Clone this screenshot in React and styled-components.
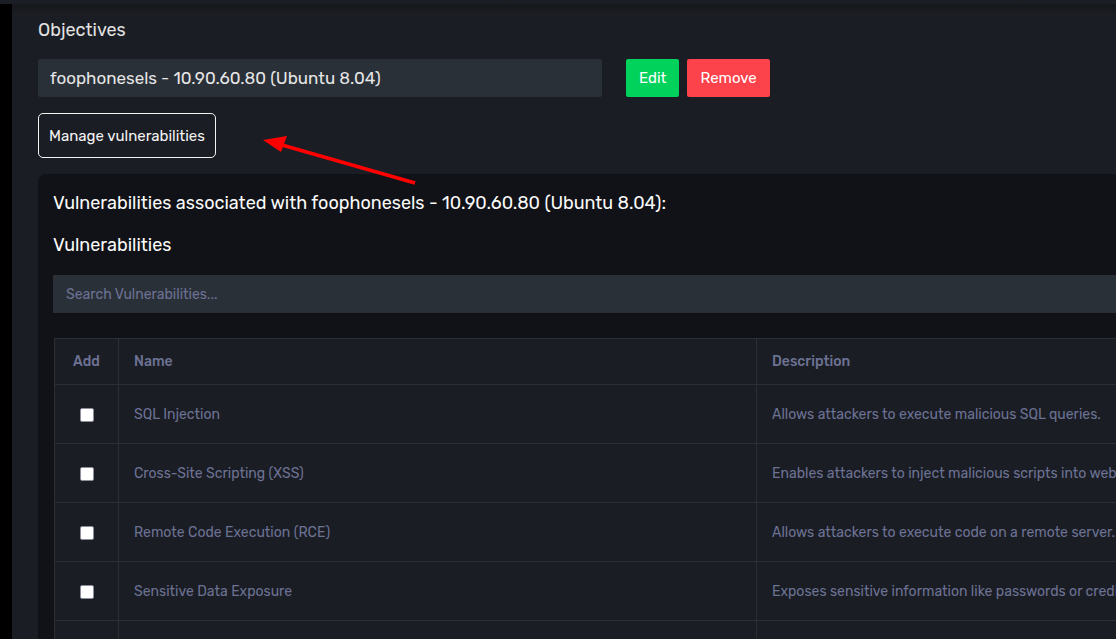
import React from "react";
import styled, { createGlobalStyle } from "styled-components";

const GlobalStyle = createGlobalStyle`
  html, body {
    margin: 0;
    padding: 0;
    background: #000;
    overflow: hidden;
    font-family: Rubik, Roboto, "Liberation Sans", sans-serif;
  }
`;

const Page = styled.div`
  position: relative;
  width: 1116px;
  height: 639px;
  overflow: hidden;
  display: flex;
  flex-direction: column;
`;

const TopStrip = styled.div`
  height: 4px;
  flex: none;
  background: #1c1e26;
`;

const Body = styled.div`
  flex: 1;
  display: flex;
`;

const SideStrip = styled.div`
  width: 12px;
  flex: none;
  background: #000;
`;

const Panel = styled.div`
  flex: none;
  width: 1400px;
  background: linear-gradient(#15171b 0, #1b1d24 10px);
  padding: 14px 26px 0;
  box-sizing: border-box;
`;

const Heading = styled.h4`
  margin: 0 0 17px;
  font-size: 18px;
  font-weight: 400;
  line-height: 24px;
  color: #e2e2e2;
`;

const ObjectiveRow = styled.div`
  display: flex;
  align-items: center;
  gap: 8px;
`;

const ObjectiveField = styled.div`
  width: 564px;
  height: 38px;
  box-sizing: border-box;
  padding: 0 12px;
  display: flex;
  align-items: center;
  background: #2a3038;
  border-radius: 2px;
  color: #e6e6e6;
  font-size: 17px;
  margin-right: 16px;
`;

const Button = styled.button`
  height: 38px;
  padding: 0 13px;
  border: none;
  border-radius: 2px;
  font-family: inherit;
  font-size: 15px;
  color: #fff;
  background: ${(p) => (p.$variant === "danger" ? "#fc424a" : "#00d25b")};
`;

const OutlineButton = styled.button`
  display: block;
  margin-top: 16px;
  height: 45px;
  padding: 0 10px;
  background: transparent;
  border: 1px solid #f2f2f2;
  border-radius: 5px;
  color: #f2f2f2;
  font-family: inherit;
  font-size: 15px;
`;

const Card = styled.div`
  margin-top: 16px;
  background: #111217;
  border-radius: 8px 0 0 0;
  padding: 18px 15px 0;
`;

const CardTitle = styled.h4`
  margin: 0;
  font-size: 18px;
  font-weight: 400;
  line-height: 22px;
  color: #fafafa;
`;

const SubTitle = styled.h4`
  margin: 20px 0 0;
  font-size: 18px;
  font-weight: 400;
  line-height: 22px;
  color: #fafafa;
`;

const Search = styled.input`
  display: block;
  margin-top: 19px;
  width: 100%;
  height: 38px;
  box-sizing: border-box;
  padding: 0 12px;
  border: 1px solid #2c2e33;
  background: #2a3038;
  color: #fff;
  font-family: inherit;
  font-size: 14px;
  outline: none;
  &::placeholder {
    color: #6c7293;
  }
`;

const Table = styled.table`
  margin-top: 25px;
  margin-left: 1px;
  width: 100%;
  border-collapse: collapse;
  background: #1b1d25;
  font-size: 14px;
  color: #6c7293;
`;

const Th = styled.th`
  height: 46px;
  box-sizing: border-box;
  padding: 0 15px;
  border: 1px solid #2c2e33;
  text-align: ${(p) => (p.$center ? "center" : "left")};
  font-weight: 500;
  width: ${(p) => p.$w || "auto"};
`;

const Td = styled.td`
  height: 59px;
  box-sizing: border-box;
  padding: 0 15px;
  border: 1px solid #2c2e33;
  text-align: ${(p) => (p.$center ? "center" : "left")};
  white-space: nowrap;
`;

const Check = styled.input`
  appearance: none;
  width: 14px;
  height: 14px;
  margin: 0;
  box-sizing: border-box;
  border: 1.5px solid #8d909c;
  border-radius: 2px;
  background: #fff;
  vertical-align: middle;
`;

const Arrow = styled.svg`
  position: absolute;
  left: 0;
  top: 0;
  pointer-events: none;
`;

const rows = [
  ["SQL Injection", "Allows attackers to execute malicious SQL queries."],
  ["Cross-Site Scripting (XSS)", "Enables attackers to inject malicious scripts into web pages viewed by users."],
  ["Remote Code Execution (RCE)", "Allows attackers to execute code on a remote server."],
  ["Sensitive Data Exposure", "Exposes sensitive information like passwords or credit card numbers."],
  ["Broken Authentication", "Allows attackers to compromise passwords or session tokens."],
];

export default function App() {
  return (
    <Page>
      <GlobalStyle />
      <TopStrip />
      <Body>
        <SideStrip />
        <Panel>
          <Heading>Objectives</Heading>
          <ObjectiveRow>
            <ObjectiveField>foophonesels - 10.90.60.80 (Ubuntu 8.04)</ObjectiveField>
            <Button>Edit</Button>
            <Button $variant="danger">Remove</Button>
          </ObjectiveRow>
          <OutlineButton>Manage vulnerabilities</OutlineButton>
          <Card>
            <CardTitle>
              Vulnerabilities associated with foophonesels - 10.90.60.80 (Ubuntu 8.04):
            </CardTitle>
            <SubTitle>Vulnerabilities</SubTitle>
            <Search placeholder="Search Vulnerabilities..." />
            <Table>
              <thead>
                <tr>
                  <Th $center $w="64px">Add</Th>
                  <Th $w="638px">Name</Th>
                  <Th>Description</Th>
                </tr>
              </thead>
              <tbody>
                {rows.map(([name, desc]) => (
                  <tr key={name}>
                    <Td $center>
                      <Check type="checkbox" />
                    </Td>
                    <Td>{name}</Td>
                    <Td>{desc}</Td>
                  </tr>
                ))}
              </tbody>
            </Table>
          </Card>
        </Panel>
      </Body>
      <Arrow width="1116" height="639">
        <line x1="415" y1="183" x2="282" y2="145" stroke="#ff0000" strokeWidth="3.5" />
        <polygon points="263,140 287,136 281,152" fill="#ff0000" />
      </Arrow>
    </Page>
  );
}
